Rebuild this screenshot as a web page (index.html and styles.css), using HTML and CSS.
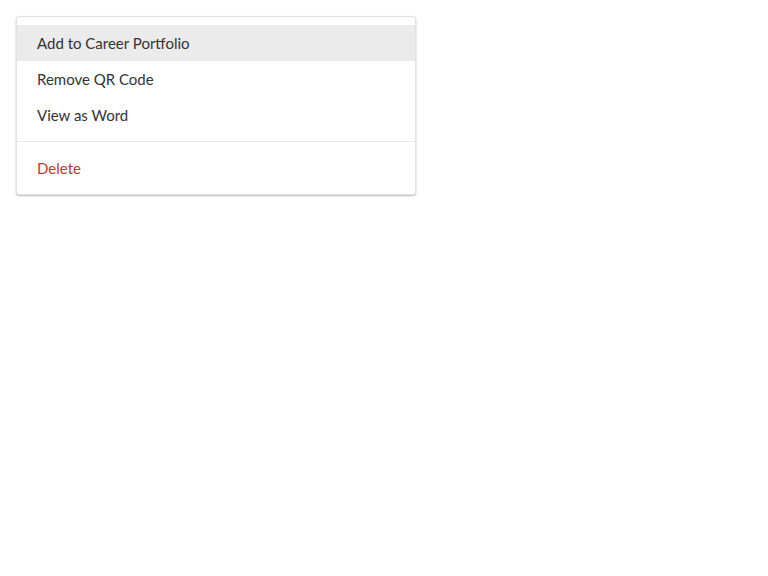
FILE: index.html
```html
<!DOCTYPE html>
<html>
<head>
<meta charset="utf-8">
<link rel="stylesheet" href="styles.css">
</head>
<body>
<div class="menu">
  <ul class="group">
    <li class="item active">Add to Career Portfolio</li>
    <li class="item">Remove QR Code</li>
    <li class="item">View as Word</li>
  </ul>
  <ul class="group">
    <li class="item danger">Delete</li>
  </ul>
</div>
</body>
</html>
```
FILE: styles.css
```css
html, body { margin: 0; padding: 0; background: #fff; }
body { padding: 16px; font-family: "Lato", "Open Sans", sans-serif; }
.menu {
  width: 398px;
  border: 1px solid #e2e2e2;
  border-radius: 3px;
  box-shadow: 0 1px 2px rgba(0,0,0,0.28);
  background: #fff;
}
.group { list-style: none; margin: 0; padding: 8px 0; }
.group + .group { border-top: 1px solid #e6e6e6; }
.item {
  height: 36px;
  line-height: 36px;
  padding: 0 20px;
  font-size: 15px;
  color: #333;
}
.item.active { background: #ebebeb; }
.item.danger { color: #c0392b; }
```
